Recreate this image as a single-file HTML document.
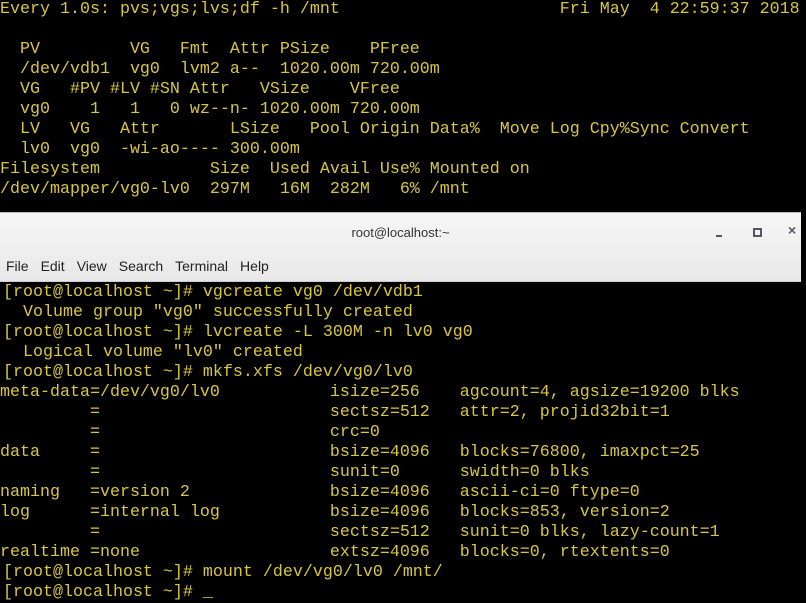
<!DOCTYPE html>
<html><head><style>
body{margin:0;width:806px;height:603px;background:#000;overflow:hidden;position:relative}
pre{margin:0;position:absolute;left:0;font-family:"Liberation Mono",monospace;font-size:16.67px;line-height:20px;color:#d8c640;white-space:pre}
#chrome{position:absolute;left:0;top:212px;width:801px;height:68px;background:linear-gradient(#f6f6f6,#e8e8e8);border-top:1px solid #bbb;border-bottom:1px solid #ccc;font-family:"Liberation Sans",sans-serif}
.title{position:absolute;top:12px;width:100%;text-align:center;font-size:13px;color:#333}
.menu{position:absolute;top:45px;left:6px;font-size:14px;color:#222}
.menu span{margin-right:12px}
</style></head><body>
<pre style="top:0px">Every 1.0s: pvs;vgs;lvs;df -h /mnt                      Fri May  4 22:59:37 2018

  PV         VG   Fmt  Attr PSize    PFree
  /dev/vdb1  vg0  lvm2 a--  1020.00m 720.00m
  VG   #PV #LV #SN Attr   VSize    VFree
  vg0    1   1   0 wz--n- 1020.00m 720.00m
  LV   VG   Attr       LSize   Pool Origin Data%  Move Log Cpy%Sync Convert
  lv0  vg0  -wi-ao---- 300.00m
Filesystem           Size  Used Avail Use% Mounted on
/dev/mapper/vg0-lv0  297M   16M  282M   6% /mnt</pre>
<div id="chrome">
<div class="title">root@localhost:~</div>
<div style="position:absolute;left:716px;top:22px;width:6px;height:2px;background:#556"></div>
<div style="position:absolute;left:753px;top:15px;width:5px;height:5px;border:2px solid #556"></div>
<div style="position:absolute;left:788px;top:9px;font:bold 14px 'Liberation Sans',sans-serif;color:#556">×</div>
<div class="menu"><span>File</span><span>Edit</span><span>View</span><span>Search</span><span>Terminal</span><span>Help</span></div>
</div>
<pre style="top:283px;left:3px">[root@localhost ~]# vgcreate vg0 /dev/vdb1
  Volume group "vg0" successfully created
[root@localhost ~]# lvcreate -L 300M -n lv0 vg0
  Logical volume "lv0" created
[root@localhost ~]# mkfs.xfs /dev/vg0/lv0
</pre>
<pre style="top:383px">meta-data=/dev/vg0/lv0           isize=256    agcount=4, agsize=19200 blks
         =                       sectsz=512   attr=2, projid32bit=1
         =                       crc=0
data     =                       bsize=4096   blocks=76800, imaxpct=25
         =                       sunit=0      swidth=0 blks
naming   =version 2              bsize=4096   ascii-ci=0 ftype=0
log      =internal log           bsize=4096   blocks=853, version=2
         =                       sectsz=512   sunit=0 blks, lazy-count=1
realtime =none                   extsz=4096   blocks=0, rtextents=0</pre>
<pre style="top:563px;left:3px">[root@localhost ~]# mount /dev/vg0/lv0 /mnt/
[root@localhost ~]# _</pre>
</body></html>
